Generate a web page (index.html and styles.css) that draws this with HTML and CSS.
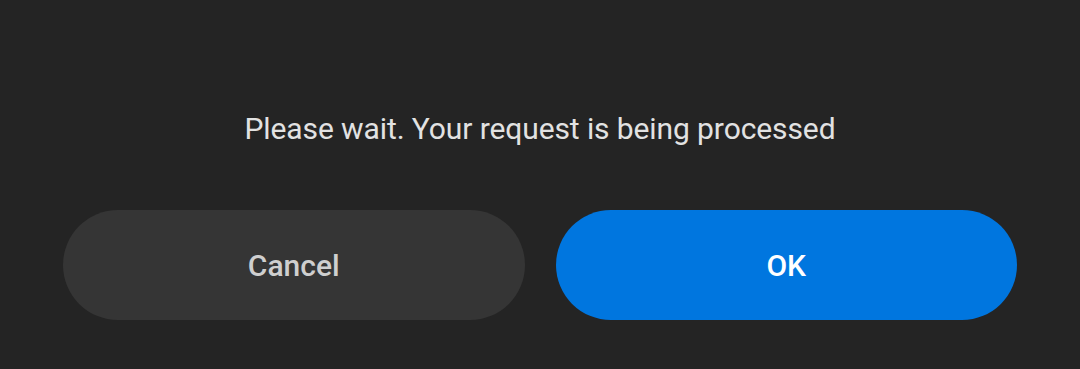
FILE: index.html
```html
<!DOCTYPE html>
<html>
<head>
<meta charset="utf-8">
<link rel="stylesheet" href="styles.css">
</head>
<body>
<div class="dialog">
  <p class="message">Please wait. Your request is being processed</p>
  <div class="actions">
    <button class="btn btn-cancel">Cancel</button>
    <button class="btn btn-ok">OK</button>
  </div>
</div>
</body>
</html>
```
FILE: styles.css
```css
html, body {
  margin: 0;
  padding: 0;
  background: #242424;
  width: 1080px;
  height: 369px;
  overflow: hidden;
}
.dialog {
  display: flex;
  flex-direction: column;
  align-items: stretch;
  padding: 113px 63px 0 63px;
  font-family: Roboto, "Liberation Sans", sans-serif;
}
.message {
  margin: 0;
  font-size: 30px;
  line-height: 32px;
  letter-spacing: -0.1px;
  color: #e2e2e2;
  text-align: center;
}
.actions {
  display: flex;
  gap: 31px;
  margin-top: 65px;
}
.btn {
  flex: 1;
  height: 110px;
  border: none;
  border-radius: 55px;
  font-family: Roboto, "Liberation Sans", sans-serif;
  font-size: 30px;
  font-weight: 500;
  padding: 0;
}
.btn-cancel {
  background: #353535;
  color: #cfcfcf;
}
.btn-ok {
  background: #0076df;
  color: #ffffff;
}
```
